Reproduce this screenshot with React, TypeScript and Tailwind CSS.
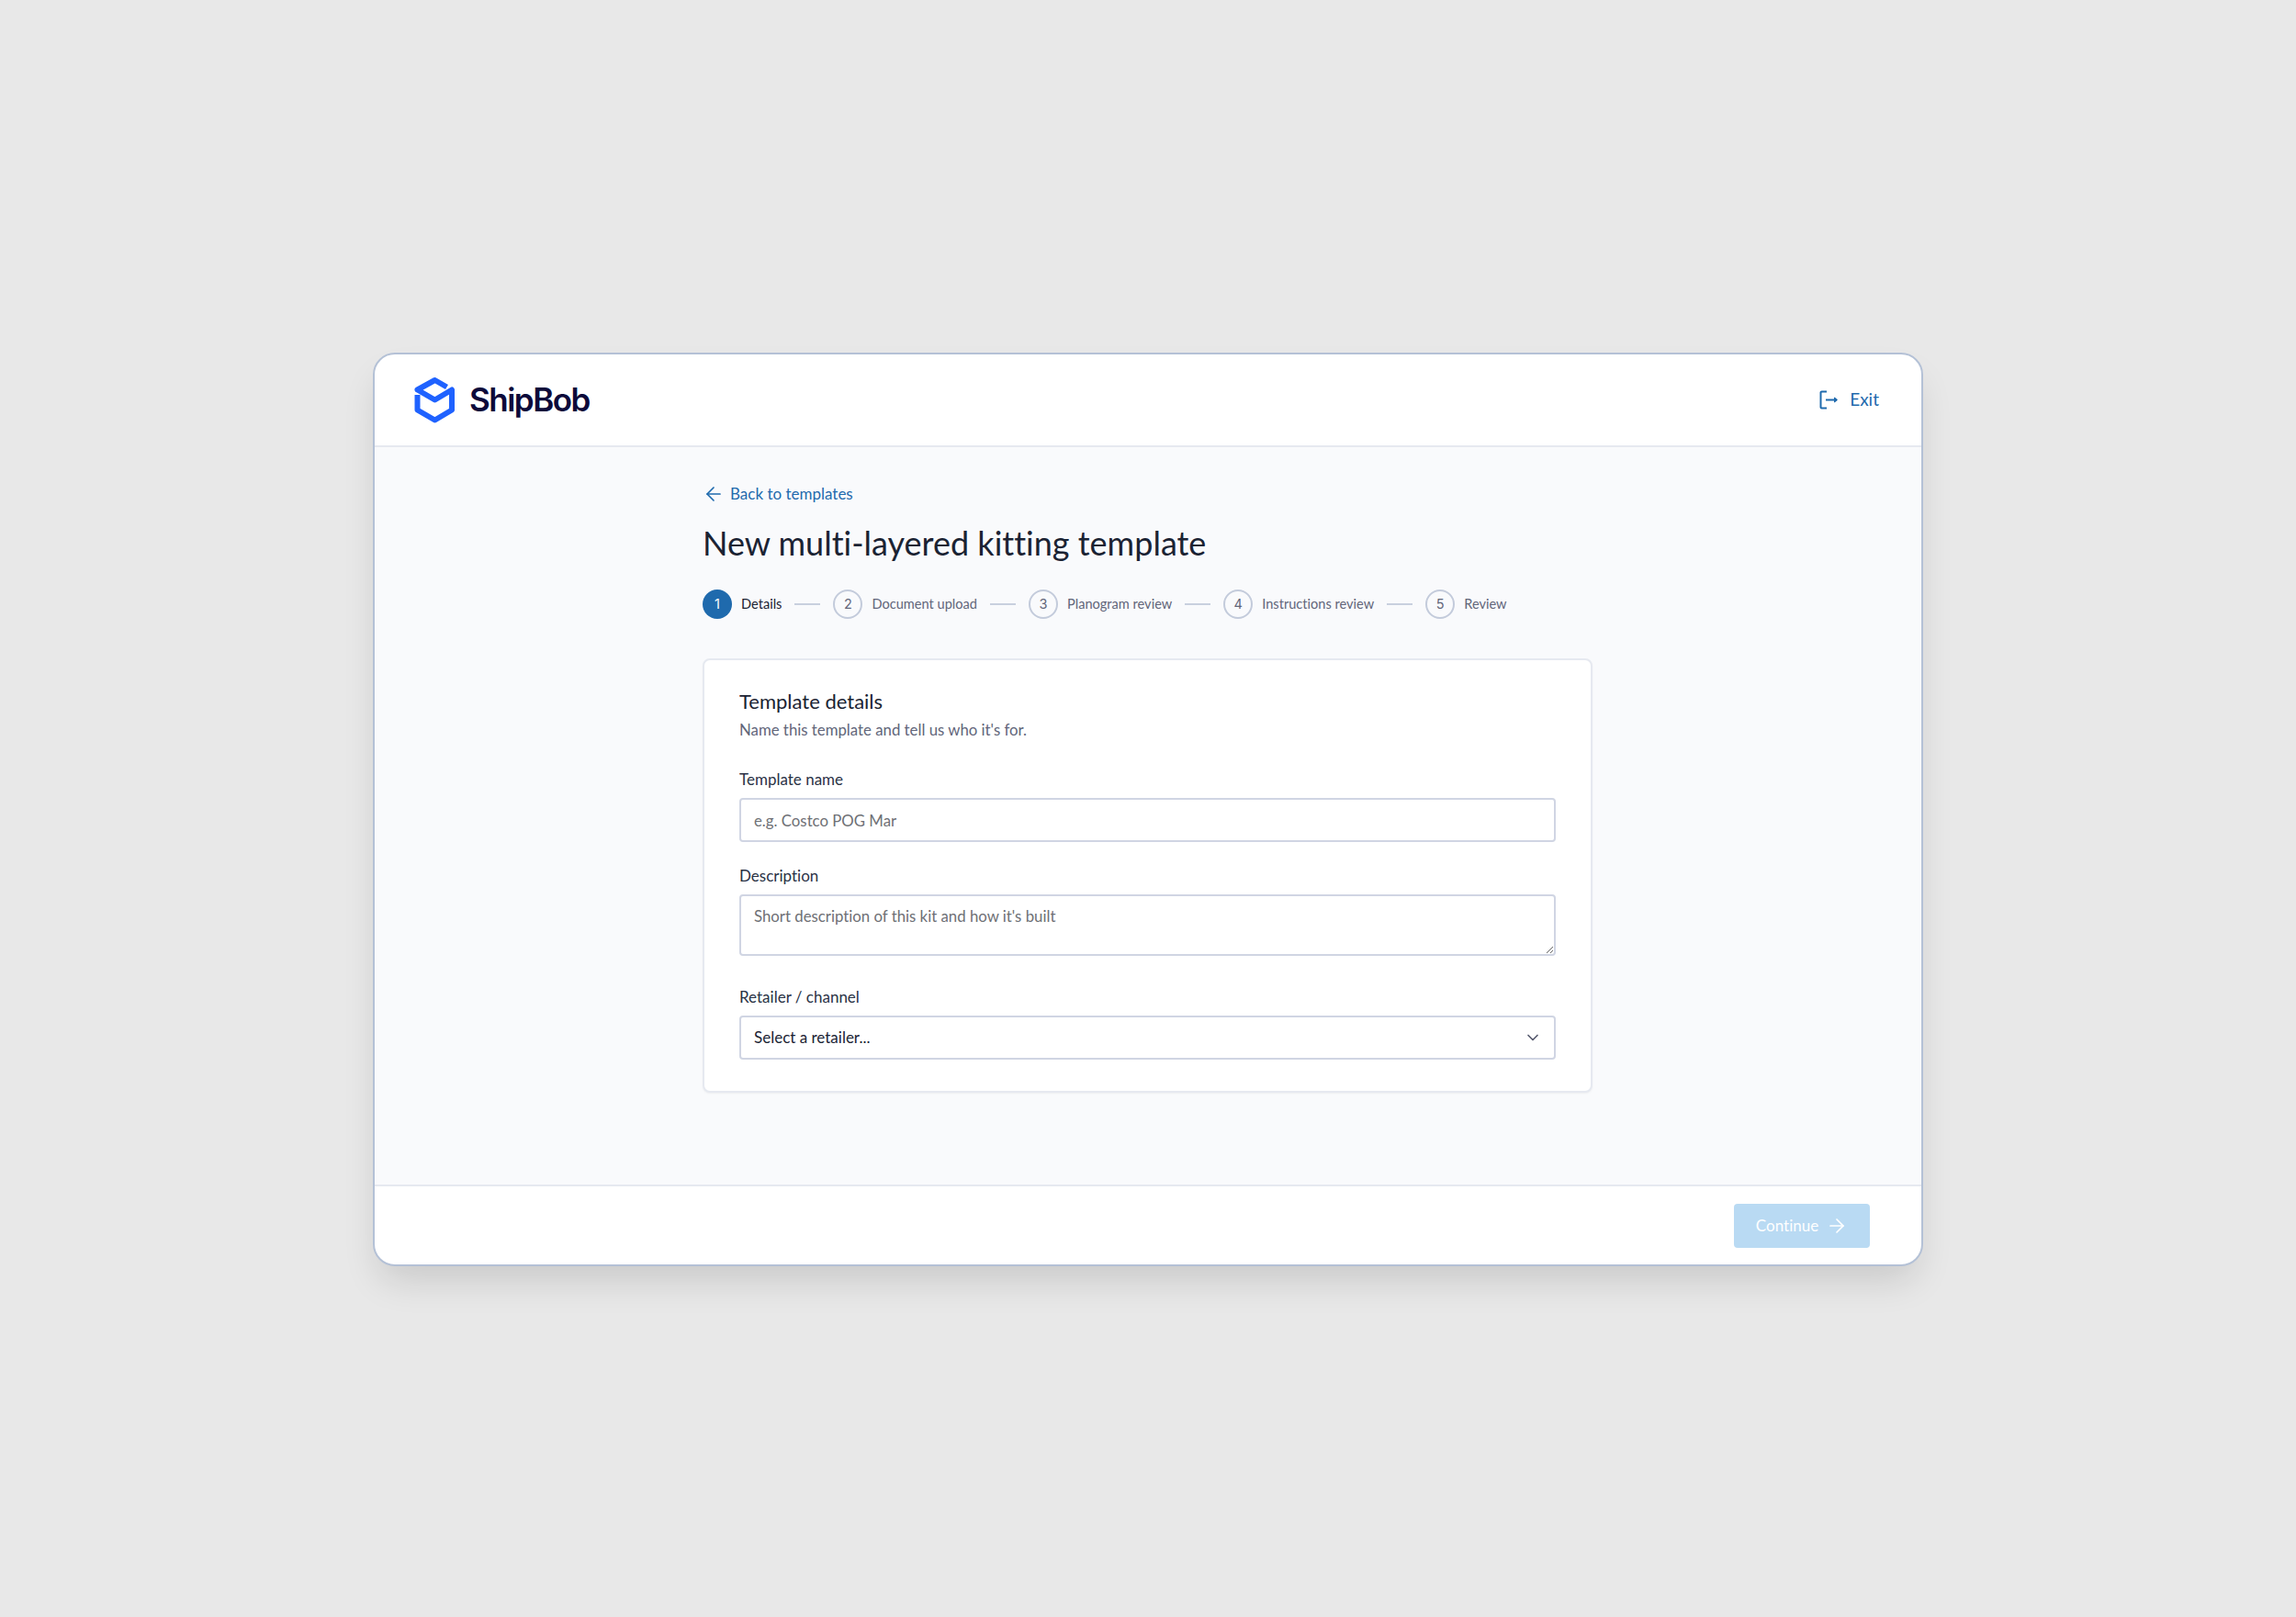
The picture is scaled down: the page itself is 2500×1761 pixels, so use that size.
import { ArrowLeft, ArrowRight, ChevronDown } from "lucide-react";

const steps = [
  { n: 1, label: "Details" },
  { n: 2, label: "Document upload" },
  { n: 3, label: "Planogram review" },
  { n: 4, label: "Instructions review" },
  { n: 5, label: "Review" },
];

function Logo() {
  return (
    <svg width="45" height="50" viewBox="0 0 45 50" fill="none">
      <path
        d="M35.5 10.5L22.5 3L3.5 13.5L22.5 24.5L41 13.5V35.5L22.5 46.5L3.5 35.5V19"
        stroke="#1f62ff"
        strokeWidth="6"
        strokeLinejoin="round"
      />
    </svg>
  );
}

function ExitIcon() {
  return (
    <svg width="21" height="21" viewBox="0 0 21 21" fill="none" stroke="#1f6aad" strokeWidth="2">
      <path d="M8 1.5H2.5a1 1 0 0 0-1 1v16a1 1 0 0 0 1 1H8" />
      <path d="M7 10.5h12" />
      <path d="M19.5 10.5l-3-2.5v5z" fill="#1f6aad" strokeWidth="1" />
    </svg>
  );
}

export default function App() {
  return (
    <div className="flex h-screen items-center justify-center bg-[#e8e8e8] font-['Lato',sans-serif] [font-variant-ligatures:none]">
      <div className="mt-[2px] flex h-[995px] w-[1688px] flex-col overflow-hidden rounded-[24px] border-2 border-[#b4c1d6] bg-white shadow-[0_22px_40px_-8px_rgba(0,0,0,0.14)]">
        {/* Header */}
        <div className="flex h-[101px] shrink-0 items-center justify-between border-b-2 border-[#e6e9f0] pl-[43px] pr-[46px]">
          <div className="flex items-center gap-[15px]">
            <Logo />
            <span className="font-['Inter',sans-serif] text-[35px] font-semibold tracking-[-1.5px] text-[#0d0a3a]">
              ShipBob
            </span>
          </div>
          <a className="flex items-center gap-3 text-[19px] text-[#1f6aad]">
            <ExitIcon />
            Exit
          </a>
        </div>

        {/* Main */}
        <div className="flex flex-1 justify-center bg-[#f9fafc] pt-[39px]">
          <div className="mr-px w-[969px]">
            <a className="flex h-6 items-center gap-[6px] text-[17px] text-[#1f6aad]">
              <ArrowLeft className="h-6 w-6" strokeWidth={1.7} />
              Back to templates
            </a>
            <h1 className="mt-[19px] text-[36px] leading-[44px] text-[#1b2333]">
              New multi-layered kitting template
            </h1>

            {/* Stepper */}
            <div className="mt-[29px] flex h-8 items-center">
              {steps.map((s, i) => (
                <div key={s.n} className="flex items-center">
                  {i > 0 && <div className="mx-[14px] h-[2px] w-[28px] bg-[#c9d0de]" />}
                  <div
                    className={
                      s.n === 1
                        ? "flex h-8 w-8 items-center justify-center rounded-full bg-[#1f6aad] font-['Inter',sans-serif] text-[14.5px] text-white"
                        : "flex h-8 w-8 items-center justify-center rounded-full border-[2.5px] border-[#c3cbdb] font-['Inter',sans-serif] text-[14.5px] text-[#62667a]"
                    }
                  >
                    {s.n}
                  </div>
                  <span
                    className={
                      s.n === 1
                        ? "ml-[10px] text-[14.6px] text-[#1b2333]"
                        : "ml-[10px] text-[14.6px] text-[#62667a]"
                    }
                  >
                    {s.label}
                  </span>
                </div>
              ))}
            </div>

            {/* Card */}
            <div className="mt-[43px] rounded-lg border-2 border-[#e6e9f0] bg-white px-[38px] pb-[34px] pt-8 shadow-[0_1px_2px_rgba(0,0,0,0.05)]">
              <h2 className="-mt-px text-[22px] leading-7 text-[#1b2333]">Template details</h2>
              <p className="mt-[5px] text-[16.8px] leading-6 text-[#62667a]">
                Name this template and tell us who it's for.
              </p>

              <label className="mt-[30px] block text-[17px] leading-6 text-[#2a3245]">Template name</label>
              <input
                placeholder="e.g. Costco POG Mar"
                className="mt-2 block h-12 w-full rounded border-2 border-[#d0d5e3] bg-white px-[14px] text-[16.8px] text-[#1b2333] outline-none placeholder:text-[#6e7075]"
              />

              <label className="mt-[25px] block text-[17px] leading-6 text-[#2a3245]">Description</label>
              <textarea
                placeholder="Short description of this kit and how it's built"
                className="mt-2 block h-[67px] w-full rounded border-2 border-[#d0d5e3] bg-white px-[14px] py-[10px] text-[16.8px] leading-6 text-[#1b2333] outline-none placeholder:text-[#6e7075]"
              />

              <label className="mt-[33px] block text-[17px] leading-6 text-[#2a3245]">Retailer / channel</label>
              <div className="relative mt-2">
                <select className="block h-12 w-full appearance-none rounded border-2 border-[#d0d5e3] bg-white px-[14px] text-[17px] text-[#1b2333] outline-none">
                  <option>Select a retailer...</option>
                </select>
                <ChevronDown
                  className="pointer-events-none absolute right-[15px] top-[14px] h-5 w-5 text-[#565a6e]"
                  strokeWidth={2}
                />
              </div>
            </div>
          </div>
        </div>

        {/* Footer */}
        <div className="flex h-[87px] shrink-0 items-center justify-end border-t-2 border-[#e6e9f0] pr-14">
          <button
            disabled
            className="flex h-12 w-[148px] items-center justify-center gap-2 rounded bg-[#b9daf3] text-[17px] text-white"
          >
            Continue
            <ArrowRight className="h-6 w-6" strokeWidth={1.7} />
          </button>
        </div>
      </div>
    </div>
  );
}
